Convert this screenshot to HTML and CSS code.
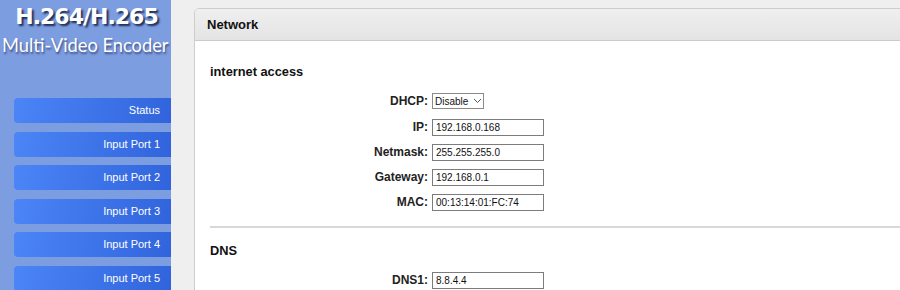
FILE: index.html
```html
<!DOCTYPE html>
<html lang="en">
<head>
  <meta charset="UTF-8">
  <title>Network</title>
  <link rel="stylesheet" href="styles.css">
</head>
<body>
  <div class="sidebar">
    <div class="logo">
      <div class="logo-title">H.264/H.265</div>
      <div class="logo-sub">Multi-Video Encoder</div>
    </div>
    <div class="nav">
      <a class="nav-btn" href="#">Status</a>
      <a class="nav-btn" href="#">Input Port 1</a>
      <a class="nav-btn" href="#">Input Port 2</a>
      <a class="nav-btn" href="#">Input Port 3</a>
      <a class="nav-btn" href="#">Input Port 4</a>
      <a class="nav-btn" href="#">Input Port 5</a>
    </div>
  </div>

  <div class="main">
    <div class="panel">
      <div class="panel-head">Network</div>
      <div class="panel-body">
        <h3 class="section-title">internet access</h3>
        <div class="form">
          <label>DHCP:</label>
          <div class="select-box">
            <select>
              <option>Disable</option>
              <option>Enable</option>
            </select>
            <svg width="9" height="6" viewBox="0 0 9 6"><path d="M1 1 L4.5 4.5 L8 1" fill="none" stroke="#555" stroke-width="1"/></svg>
          </div>
          <label>IP:</label>
          <input type="text" value="192.168.0.168">
          <label>Netmask:</label>
          <input type="text" value="255.255.255.0">
          <label>Gateway:</label>
          <input type="text" value="192.168.0.1">
          <label>MAC:</label>
          <input type="text" value="00:13:14:01:FC:74">
        </div>
        <div class="divider"></div>
        <h3 class="section-title dns">DNS</h3>
        <div class="form">
          <label>DNS1:</label>
          <input type="text" value="8.8.4.4">
        </div>
      </div>
    </div>
  </div>
</body>
</html>
```

FILE: styles.css
```css
body {
  margin: 0;
  height: 290px;
  display: flex;
  overflow: hidden;
  background-color: #efefef;
  font-family: "Liberation Sans", Arial, sans-serif;
}
.sidebar {
  width: 171px;
  flex-shrink: 0;
  background-color: #7d9de1;
  padding-top: 4px;
  overflow: hidden;
}
.logo {
  color: #fff;
  white-space: nowrap;
}
.logo-title {
  font-family: "DejaVu Sans", sans-serif;
  font-weight: bold;
  font-size: 22px;
  letter-spacing: -1px;
  line-height: 26px;
  text-align: center;
  padding-left: 2px;
  text-shadow: 2px 2px 2px #1d2c55;
}
.logo-sub {
  font-family: Lato, sans-serif;
  font-size: 18.3px;
  line-height: 24px;
  margin-top: 3px;
  padding-left: 2px;
  text-shadow: 1px 2px 2px rgba(20, 30, 70, 0.6);
}
.nav {
  margin-top: 41px;
  margin-left: 14px;
  display: flex;
  flex-direction: column;
  gap: 8.6px;
}
.nav-btn {
  display: block;
  height: 25px;
  line-height: 25px;
  padding-right: 11px;
  text-align: right;
  font-size: 11px;
  color: #fff;
  text-decoration: none;
  border-radius: 4px 0 0 4px;
  background: linear-gradient(100deg, #4b85f6, #3164dc);
}
.main {
  flex: 1;
  padding: 8px 0 0 23px;
  overflow: hidden;
}
.panel {
  width: 800px;
  border: 1px solid #cdcdcd;
  border-radius: 5px;
  background-color: #fff;
  overflow: hidden;
}
.panel-head {
  height: 31px;
  line-height: 31px;
  padding-left: 12px;
  font-size: 13px;
  font-weight: bold;
  color: #111;
  background: linear-gradient(#efefef, #e4e4e4);
  border-bottom: 1px solid #cbcbcb;
}
.panel-body {
  padding: 0 0 20px 15px;
}
.section-title {
  margin: 23px 0 0;
  font-size: 12.8px;
  line-height: 15px;
  color: #111;
}
.section-title.dns {
  margin-top: 15px;
}
.form {
  display: grid;
  grid-template-columns: 218px 112px;
  column-gap: 4px;
  row-gap: 8px;
  margin-top: 14px;
}
.form label {
  text-align: right;
  font-size: 12px;
  font-weight: bold;
  color: #222;
  line-height: 17px;
}
.form input {
  box-sizing: border-box;
  width: 112px;
  height: 17px;
  margin: 0;
  padding: 0 3px;
  border: 1px solid #7c7c7c;
  font-family: "Liberation Sans", Arial, sans-serif;
  font-size: 10px;
  color: #111;
}
.select-box {
  box-sizing: border-box;
  width: 52px;
  height: 16px;
  margin-bottom: 2px;
  display: flex;
  align-items: center;
  border: 1px solid #8a8a8a;
  background-color: #fff;
}
.select-box select {
  appearance: none;
  -webkit-appearance: none;
  border: none;
  background: transparent;
  padding: 0 0 0 2px;
  margin: 0;
  width: 38px;
  font-family: "Liberation Sans", Arial, sans-serif;
  font-size: 10px;
  color: #111;
  outline: none;
}
.select-box svg {
  margin-left: 2px;
}
.divider {
  margin-top: 15px;
  border-top: 2px solid #d8d8d8;
}
```
